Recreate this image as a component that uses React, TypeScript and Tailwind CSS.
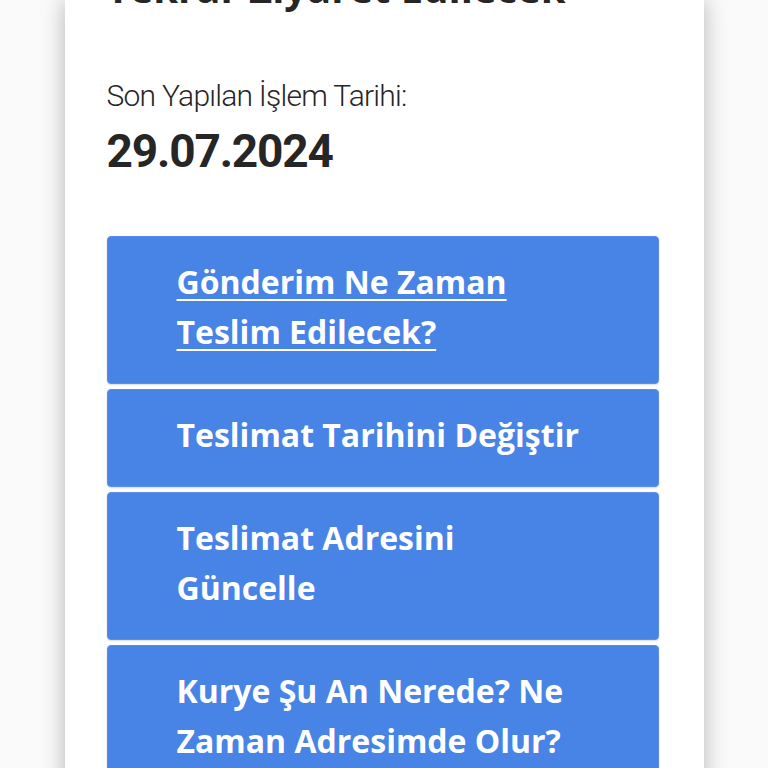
import React from 'react'

const actions = [
  { label: 'Gönderim Ne Zaman Teslim Edilecek?', link: true },
  { label: 'Teslimat Tarihini Değiştir', link: false },
  { label: 'Teslimat Adresini Güncelle', link: false },
  { label: 'Kurye Şu An Nerede? Ne Zaman Adresimde Olur?', link: false },
]

function ActionButton({ label, link }: { label: string; link: boolean }) {
  return (
    <button
      type="button"
      className="w-full text-left bg-[#4784e6] border border-[#5a8fe4] rounded-[4px] shadow-[0_1px_2px_rgba(0,0,0,0.15)] pl-[69px] pr-[69px] pt-5 pb-[26px]"
    >
      <span
        className={
          'block text-white font-bold text-[32px] leading-[50px] font-["Open_Sans",sans-serif] ' +
          (link ? 'underline decoration-2 underline-offset-[5px]' : '')
        }
      >
        {label}
      </span>
    </button>
  )
}

export default function App() {
  return (
    <div className="min-h-screen bg-[#fafafa] flex justify-center overflow-hidden">
      <div className="w-[639px] bg-white shadow-[0_0_22px_rgba(0,0,0,0.28)] pl-[42px] pr-[45px] pb-10">
        <h1 className="mt-[-36px] text-[40px] leading-[48px] font-bold text-[#262626] font-['Open_Sans',sans-serif]">
          Tekrar Ziyaret Edilecek
        </h1>

        <p className="mt-[66px] text-[30px] leading-[36px] font-light tracking-tight text-[#262626] font-['Roboto',sans-serif]">
          Son Yapılan İşlem Tarihi:
        </p>
        <p className="mt-[11px] text-[46px] leading-[52px] font-bold tracking-tight text-[#262626] font-['Roboto',sans-serif]">
          29.07.2024
        </p>

        <div className="mt-[59px] flex flex-col gap-[5px]">
          {actions.map((a) => (
            <ActionButton key={a.label} label={a.label} link={a.link} />
          ))}
        </div>
      </div>
    </div>
  )
}
